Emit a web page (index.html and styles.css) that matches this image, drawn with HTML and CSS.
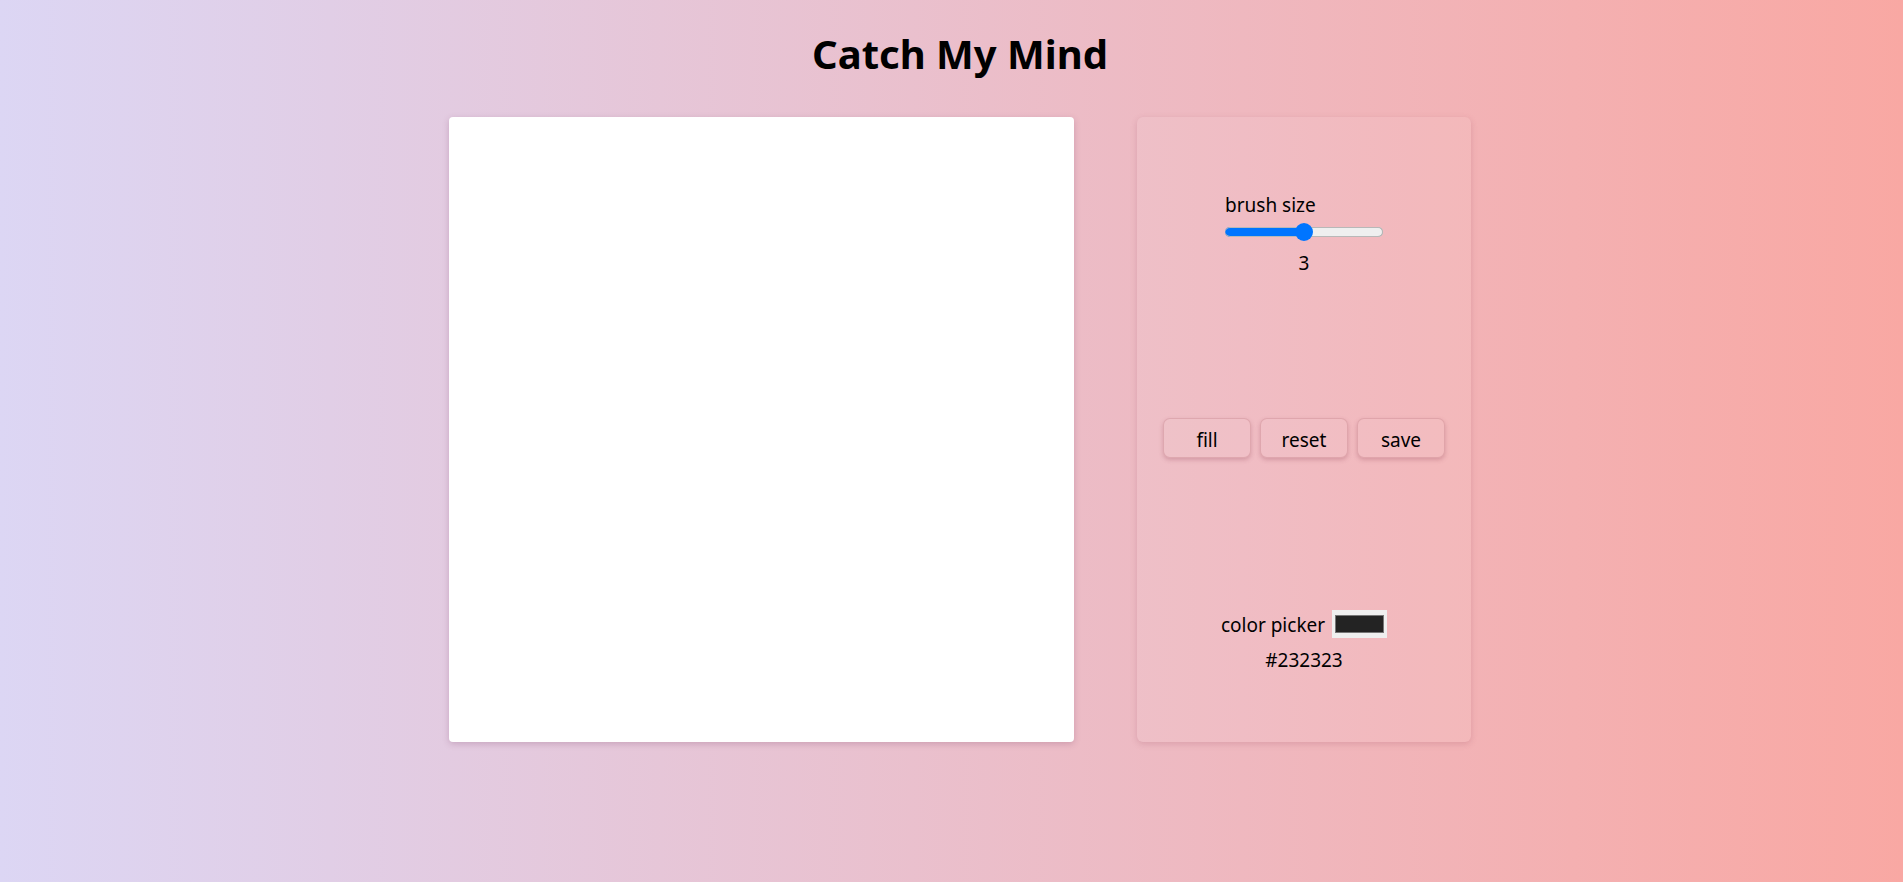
FILE: index.html
```html
<!DOCTYPE html>
<html lang="ko">
<head>
<meta charset="utf-8">
<title>Catch My Mind</title>
<link rel="stylesheet" href="styles.css">
</head>
<body>
  <h1 class="title">Catch My Mind</h1>
  <main class="layout">
    <canvas class="board" width="625" height="625"></canvas>
    <section class="panel">
      <div class="brush">
        <label class="brush-label" for="size">brush size</label>
        <input class="range" id="size" type="range" min="1" max="5" value="3">
        <span class="brush-value">3</span>
      </div>
      <div class="actions">
        <button class="btn">fill</button>
        <button class="btn">reset</button>
        <button class="btn">save</button>
      </div>
      <div class="picker">
        <div class="picker-row">
          <span class="picker-label">color picker</span>
          <span class="swatch"><span class="swatch-inner"></span></span>
        </div>
        <span class="picker-value">#232323</span>
      </div>
    </section>
  </main>
</body>
</html>
```
FILE: styles.css
```css
html, body {
  margin: 0;
  padding: 0;
}
body {
  min-height: 882px;
  background: linear-gradient(to right, #dcd6f4, #f9a8a3);
  font-family: "Noto Sans", "Noto Sans CJK KR", sans-serif;
  font-size: 19px;
  color: #000;
}
.title {
  margin: 0;
  padding: 26px 0 0 17px;
  height: 95px;
  box-sizing: border-box;
  text-align: center;
  font-size: 40px;
  line-height: 56px;
  font-weight: 700;
}
.layout {
  display: flex;
  justify-content: center;
  gap: 63px;
  padding-left: 17px;
  margin-top: 22px;
}
.board {
  display: block;
  width: 625px;
  height: 625px;
  background: #fff;
  border-radius: 4px;
  box-shadow: 0 2px 6px rgba(120, 60, 100, 0.25);
}
.panel {
  width: 334px;
  height: 625px;
  box-sizing: border-box;
  padding-top: 76px;
  border-radius: 6px;
  background: rgba(255, 255, 255, 0.08);
  box-shadow: 0 2px 6px rgba(150, 70, 90, 0.22);
  display: flex;
  flex-direction: column;
  align-items: center;
}
.brush {
  display: flex;
  flex-direction: column;
  width: 158px;
}
.brush-label {
  line-height: 24px;
}
.brush-value {
  text-align: center;
  line-height: 24px;
  margin-top: 10px;
}
.range {
  -webkit-appearance: none;
  appearance: none;
  width: 158px;
  height: 18px;
  margin: 6px 0 0;
  background: transparent;
}
.range::-webkit-slider-runnable-track {
  height: 10px;
  border-radius: 5px;
  background: linear-gradient(to right, #0075ff 0 50%, #efefef 50% 100%);
  box-shadow: inset -1px 0 0 #b2b2b2, inset 0 1px 0 #b8b8b8, inset 0 -1px 0 #b8b8b8;
}
.range::-webkit-slider-thumb {
  -webkit-appearance: none;
  width: 18px;
  height: 18px;
  margin-top: -4px;
  border-radius: 50%;
  background: #0075ff;
  border: none;
}
.actions {
  display: flex;
  gap: 9px;
  margin-top: 143px;
}
.btn {
  width: 88px;
  height: 40px;
  font-family: inherit;
  font-size: 19px;
  color: #000;
  background: rgba(255, 255, 255, 0.05);
  border: 1px solid rgba(190, 120, 130, 0.35);
  border-radius: 7px;
  box-shadow: 0 2px 4px rgba(150, 70, 90, 0.3);
  padding: 3px 0 0;
  cursor: pointer;
}
.picker {
  display: flex;
  flex-direction: column;
  align-items: center;
  margin-top: 152px;
}
.picker-row {
  display: flex;
  align-items: flex-start;
  gap: 7px;
}
.picker-label {
  line-height: 26px;
  padding-top: 2px;
}
.swatch {
  display: block;
  width: 55px;
  height: 28px;
  box-sizing: border-box;
  padding: 5px 3px;
  background: #efefef;
}
.swatch-inner {
  display: block;
  height: 100%;
  box-sizing: border-box;
  border: 1px solid #767676;
  background: #232323;
}
.picker-value {
  line-height: 24px;
  margin-top: 10px;
}
```
